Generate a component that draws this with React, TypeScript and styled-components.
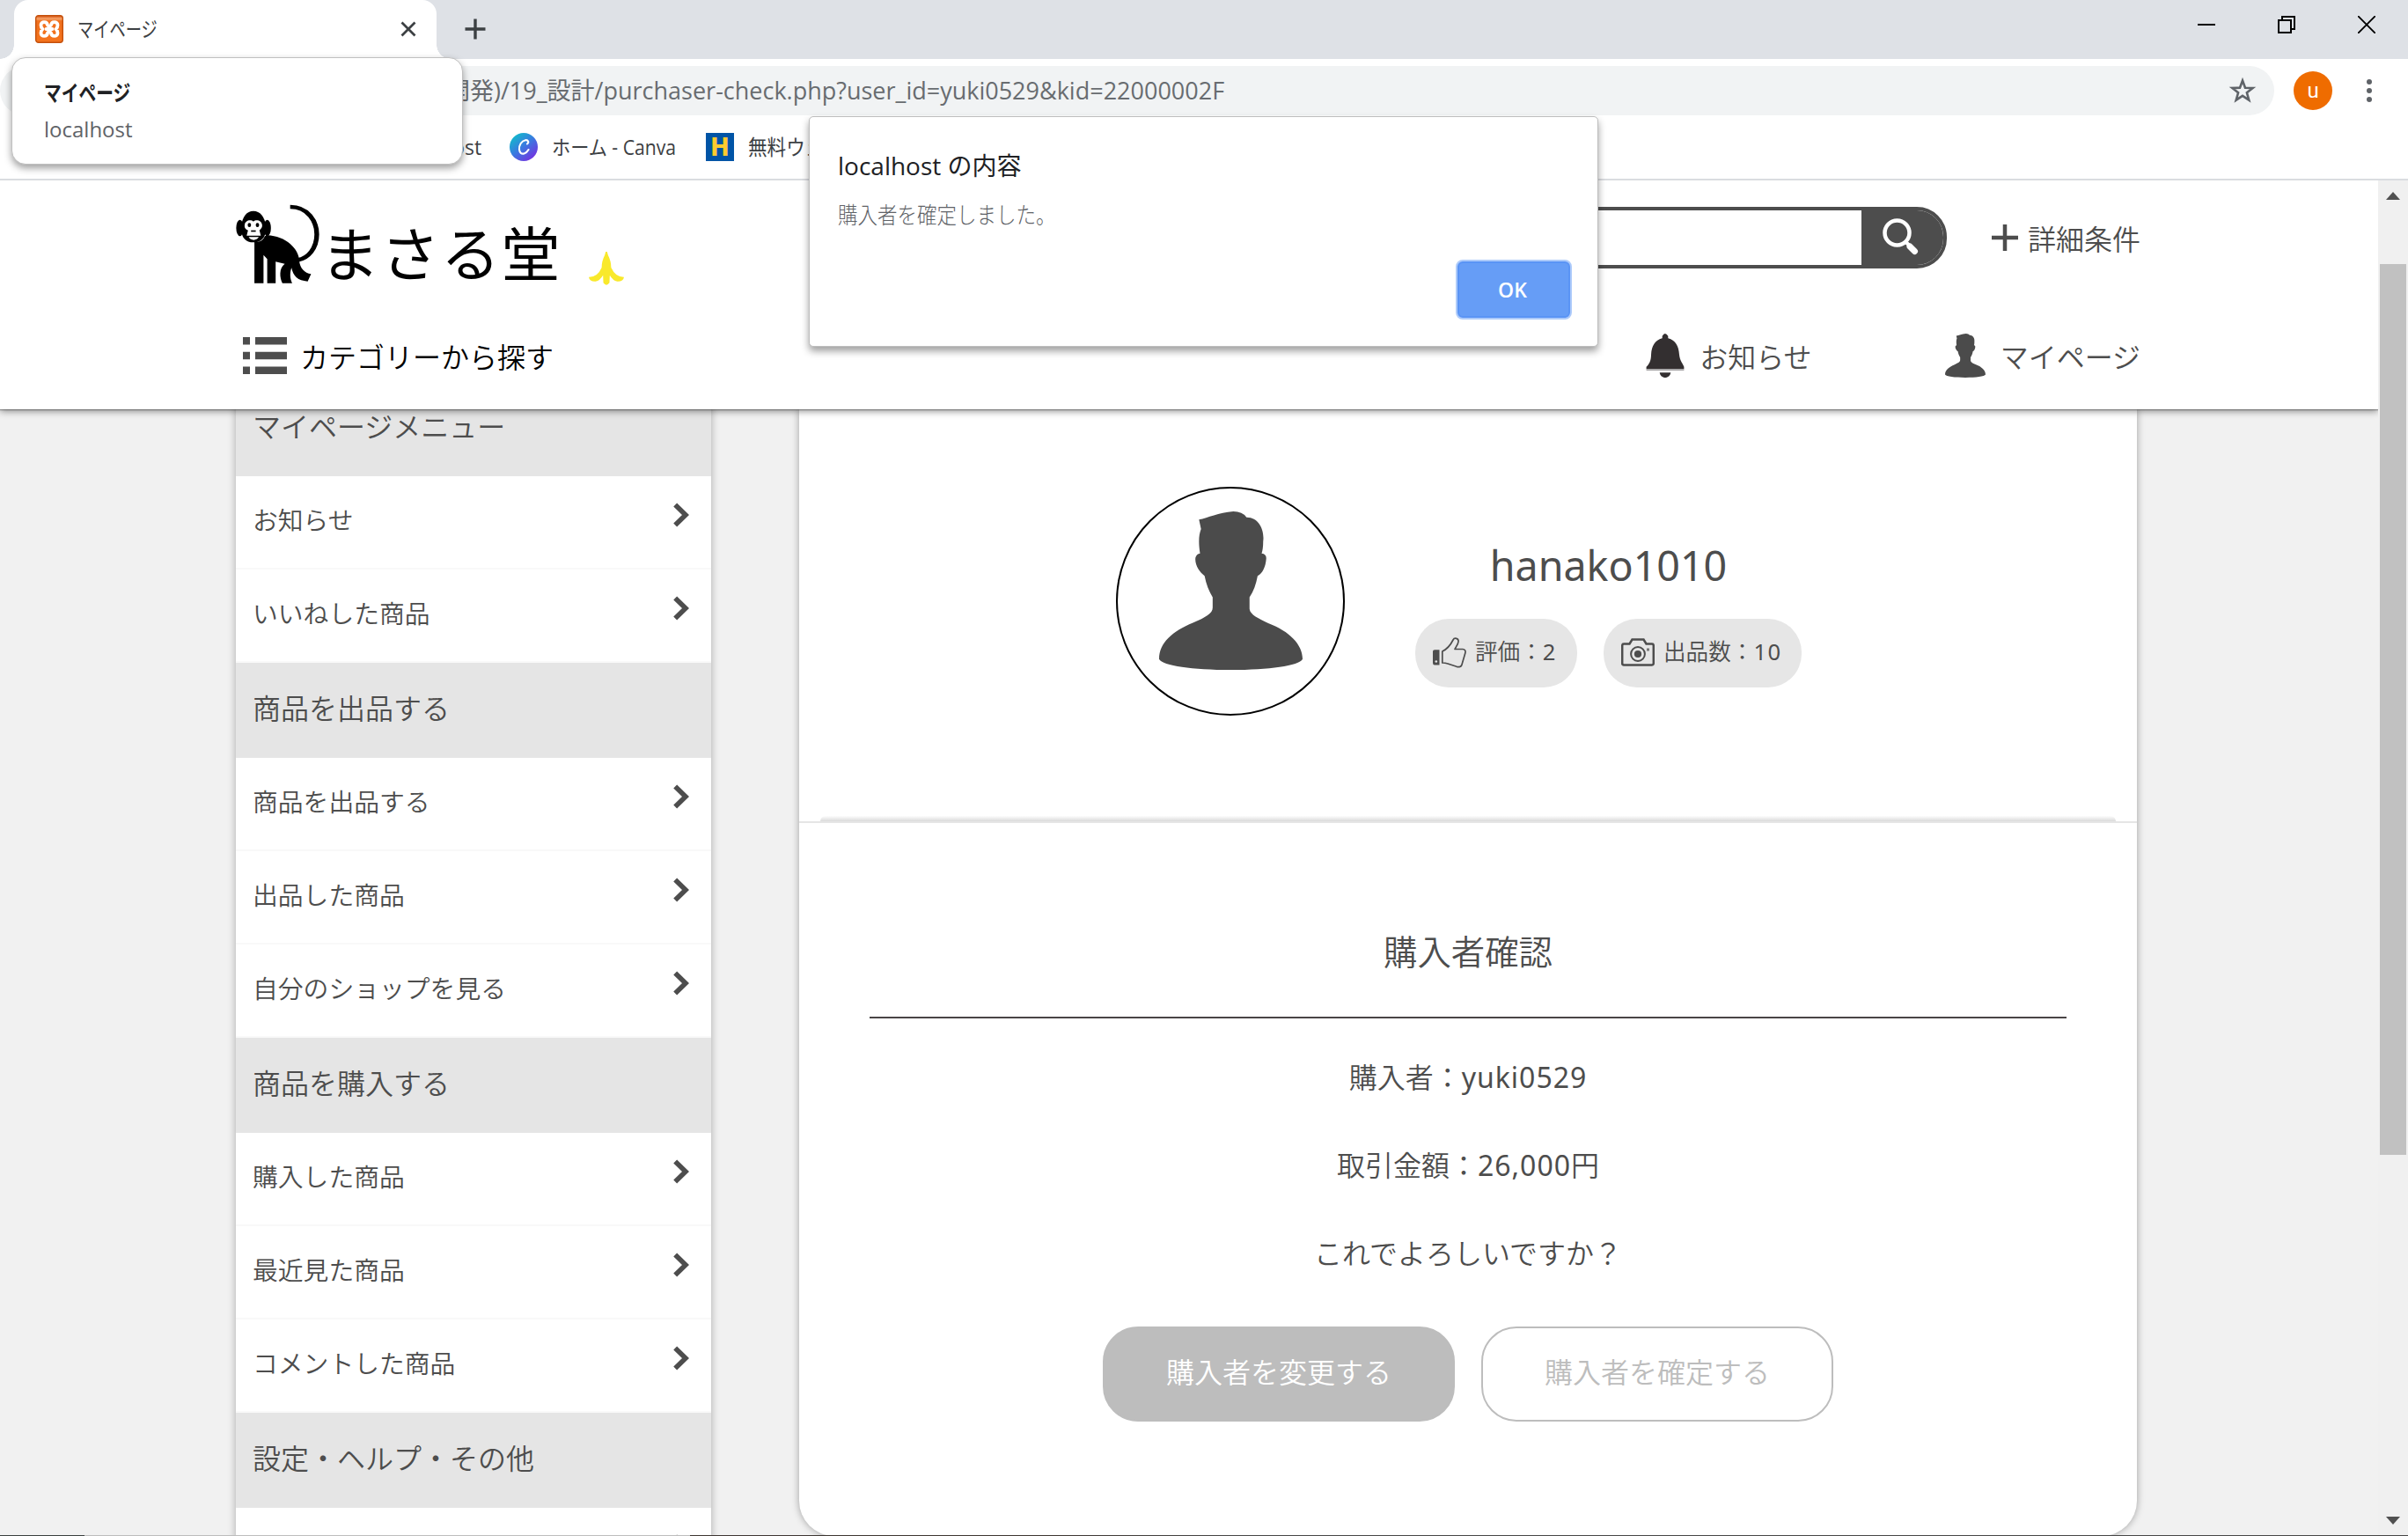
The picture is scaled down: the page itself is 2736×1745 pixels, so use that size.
import React from 'react';
import styled, { createGlobalStyle } from 'styled-components';

const PAGE_FONT = '"Noto Sans", "Noto Sans CJK JP DemiLight", "Noto Sans CJK JP", sans-serif';
const UI_FONT = '"Open Sans", "Noto Sans CJK JP", sans-serif';
const INK = '#4d4d4d';

const GlobalStyle = createGlobalStyle`
  * { box-sizing: border-box; }
  html, body { margin: 0; padding: 0; overflow: hidden; background: #f1f1f1; }
`;

/* ---------- Browser window ---------- */

const Window = styled.div`
  position: relative;
  width: 2736px;
  height: 1745px;
  display: flex;
  flex-direction: column;
  overflow: hidden;
  background: #fff;
  font-family: ${UI_FONT};
  white-space: nowrap;
`;

const TabStrip = styled.div`
  display: flex;
  align-items: stretch;
  height: 67px;
  flex: none;
  background: #dee1e6;
  padding-left: 16px;
`;

const Tab = styled.div`
  position: relative;
  width: 480px;
  height: 67px;
  display: flex;
  align-items: center;
  padding: 0 23px 1px 24px;
  gap: 16px;
  background: #fff;
  border-radius: 16px 16px 0 0;
  &::before, &::after {
    content: '';
    position: absolute;
    bottom: 0;
    width: 16px;
    height: 16px;
  }
  &::before { left: -16px; background: radial-gradient(circle at 0 0, transparent 15.5px, #fff 16px); }
  &::after { right: -16px; background: radial-gradient(circle at 100% 0, transparent 15.5px, #fff 16px); }
`;

const UiText = styled.span<{ $size: number; $color: string; $weight?: number; $stretch?: number }>`
  display: inline-block;
  font-size: ${p => p.$size}px;
  line-height: 36px;
  color: ${p => p.$color};
  font-weight: ${p => p.$weight ?? 400};
  transform: scaleX(${p => p.$stretch ?? 1});
  transform-origin: 0 50%;
`;

const TabTitle = styled.div`
  flex: 1;
  width: 0;
`;

const NewTab = styled.div`
  display: flex;
  align-items: center;
  margin-left: 32px;
  padding-bottom: 1px;
`;

const WindowButtons = styled.div`
  margin-left: auto;
  display: flex;
  gap: 71px;
  padding: 18px 37px 0 0;
`;

const Toolbar = styled.div`
  display: flex;
  align-items: center;
  height: 72px;
  flex: none;
  background: #fff;
  padding-right: 41px;
`;

const AddressBar = styled.div`
  flex: 1;
  height: 56px;
  display: flex;
  align-items: center;
  justify-content: space-between;
  margin-right: 22px;
  padding: 0 20px 0 507px;
  border-radius: 28px;
  background: #f1f3f4;
`;

const Avatar = styled.div`
  width: 44px;
  height: 44px;
  border-radius: 50%;
  background: #ef6c00;
  color: #fff;
  display: flex;
  align-items: center;
  justify-content: center;
  font: 24px/1 Roboto, sans-serif;
  margin-right: 39px;
`;

const Bookmarks = styled.div`
  display: flex;
  align-items: center;
  height: 66px;
  flex: none;
  border-bottom: 2px solid #dadce0;
  padding: 0 0 8px 500px;
  background: #fff;
`;

const Bookmark = styled.div<{ $width: number }>`
  display: flex;
  align-items: center;
  gap: 16px;
  width: ${p => p.$width}px;
  flex: none;
`;

const HIcon = styled.div`
  width: 32px;
  height: 32px;
  flex: none;
  background: #0054a6;
  color: #ffcb2f;
  display: flex;
  align-items: center;
  justify-content: center;
  font: bold 29px/32px "DejaVu Sans Condensed", "DejaVu Sans", sans-serif;
`;

const Viewport = styled.div`
  display: flex;
  flex: 1;
  min-height: 0;
`;

const Scrollbar = styled.div`
  width: 34px;
  flex: none;
  display: flex;
  flex-direction: column;
  align-items: center;
  background: #f0f0f0;
  padding: 13px 0 12px;
`;

const ScrollThumb = styled.div`
  width: 30px;
  height: 1012px;
  margin: 73px 0 auto;
  background: #c1c1c1;
`;

const BottomEdge = styled.div`
  height: 1px;
  flex: none;
  background: linear-gradient(90deg, #3a403e 96px, #bdbdbd 96px 784px, #3e3733 784px 1200px, #474747 1400px);
`;

/* ---------- Popups over the window ---------- */

const TabCard = styled.div`
  position: absolute;
  left: 13px;
  top: 65px;
  width: 513px;
  height: 122px;
  display: flex;
  flex-direction: column;
  padding: 21px 0 0 36px;
  gap: 6px;
  background: #fff;
  border: 1px solid #c0c0c0;
  border-radius: 16px;
  box-shadow: 0 4px 9px rgba(0, 0, 0, 0.38);
  z-index: 5;
`;

const Dialog = styled.div`
  position: absolute;
  left: 919px;
  top: 132px;
  width: 897px;
  height: 262px;
  display: flex;
  flex-direction: column;
  padding: 37px 29px 0 32px;
  background: #fff;
  border: 1px solid #bdbdbd;
  border-radius: 5px;
  box-shadow: 0 5px 9px rgba(0, 0, 0, 0.38);
  z-index: 6;
`;

const DialogMessage = styled.div`
  margin-top: 20px;
`;

const OkButton = styled.button`
  align-self: flex-end;
  margin-top: 33px;
  width: 132px;
  height: 68px;
  padding: 0 3px 0 0;
  border: 2px solid #aecbfa;
  border-radius: 8px;
  background: #669df6;
  box-shadow: inset 0 0 0 2px #5a94f5;
  color: #fff;
  font: 600 23px/1 ${UI_FONT};
`;

/* ---------- Site ---------- */

const Site = styled.div`
  flex: 1;
  display: flex;
  flex-direction: column;
  min-width: 0;
  overflow: hidden;
  background: #f1f1f1;
  color: ${INK};
  font-family: ${PAGE_FONT};
  font-weight: 350;
`;

const Latin = styled.span<{ $tracking: number }>`
  font-weight: 400;
  letter-spacing: ${p => p.$tracking}px;
`;

const Header = styled.header`
  position: relative;
  z-index: 2;
  height: 260px;
  flex: none;
  display: flex;
  flex-direction: column;
  padding: 27px 270px 0 268px;
  background: #fff;
  box-shadow: 0 1px 1px rgba(0, 0, 0, 0.3), 0 2px 8px rgba(0, 0, 0, 0.45);
`;

const TopRow = styled.div`
  display: flex;
  align-items: flex-start;
  height: 147px;
`;

const Brand = styled.div`
  display: flex;
  align-items: flex-start;
`;

const BrandName = styled.span`
  margin: 13px 0 0 1px;
  width: 305px;
  color: #000;
  font: 400 67px/80px "Noto Sans CJK JP", sans-serif;
  letter-spacing: 1.5px;
`;

const Banana = styled.div`
  padding-top: 54px;
`;

const SearchBox = styled.div`
  display: flex;
  margin: 3px 51px 0 auto;
  width: 871px;
  height: 70px;
  border: 4px solid ${INK};
  border-radius: 34px;
  background: #fff;
  overflow: hidden;
`;

const SearchButton = styled.div`
  margin-left: auto;
  width: 93px;
  background: ${INK};
  padding: 9px 0 0 23px;
`;

const NavItem = styled.div<{ $gap: number; $color?: string }>`
  display: flex;
  align-items: center;
  gap: ${p => p.$gap}px;
  font-size: 32px;
  line-height: 40px;
  color: ${p => p.$color ?? INK};
  & > span { padding-top: 4px; }
`;

const DetailLink = styled(NavItem)`
  margin-top: 12px;
  height: 52px;
`;

const NavRow = styled.nav`
  display: flex;
  align-items: center;
  height: 50px;
  padding-left: 8px;
`;

const NavRight = styled.div`
  display: flex;
  gap: 151px;
  margin-left: auto;
`;

const Body = styled.main`
  flex: 1;
  min-height: 0;
  display: flex;
  align-items: flex-start;
  gap: 100px;
  padding-left: 268px;
`;

const Sidebar = styled.aside`
  width: 540px;
  margin-top: -32px;
  flex: none;
  background: #fff;
  box-shadow: 0 0 9px rgba(0, 0, 0, 0.3);
`;

const MenuHeading = styled.div`
  display: flex;
  align-items: center;
  height: 108px;
  padding: 0 19px 4px;
  background: #e5e5e5;
  font-size: 32px;
  line-height: 48px;
`;

const MenuRow = styled.div`
  display: flex;
  align-items: center;
  justify-content: space-between;
  height: 106px;
  padding: 0 25px 4px 19px;
  border-bottom: 2px solid #f9f9f9;
  font-size: 28.8px;
  line-height: 44px;
  & > svg { margin-bottom: 13px; }
`;

const Panel = styled.section`
  width: 1520px;
  height: 1280px;
  flex: none;
  background: #fff;
  border-radius: 0 0 40px 40px;
  box-shadow: 0 0 9px rgba(0, 0, 0, 0.35);
`;

const Profile = styled.div`
  height: 462px;
  display: flex;
  align-items: flex-start;
  padding: 88px 0 0 360px;
  gap: 80px;
`;

const AvatarRing = styled.div`
  width: 260px;
  height: 260px;
  border: 2px solid #000;
  border-radius: 50%;
  display: flex;
  justify-content: center;
  padding-top: 26px;
`;

const ProfileInfo = styled.div`
  display: flex;
  flex-direction: column;
  align-items: center;
  padding-top: 54px;
`;

const UserName = styled.div`
  font-size: 46.6px;
  line-height: 70px;
  font-weight: 400;
`;

const Stats = styled.div`
  display: flex;
  gap: 30px;
  margin-top: 26px;
`;

const Stat = styled.div<{ $width: number }>`
  width: ${p => p.$width}px;
  height: 78px;
  border-radius: 38px;
  background: #e6e6e6;
  display: flex;
  align-items: center;
  gap: 10px;
  padding: 0 0 2px 20px;
  font-size: 25.6px;
  line-height: 40px;
`;

const SeamShadow = styled.div`
  height: 6px;
  margin: 0 24px;
  border-radius: 12px 12px 0 0;
  background: linear-gradient(#fdfdfd, #dadada);
`;

const Confirm = styled.div`
  display: flex;
  flex-direction: column;
  align-items: center;
  border-top: 2px solid #e5e5e5;
  padding: 116px 80px 0;
`;

const ConfirmTitle = styled.h1`
  margin: 0;
  width: 100%;
  height: 106px;
  border-bottom: 2px solid #494546;
  text-align: center;
  font-size: 38.4px;
  font-weight: 350;
  line-height: 60px;
`;

const Line = styled.p<{ $first?: boolean }>`
  margin: ${p => (p.$first ? '43px' : '52px')} 0 0;
  font-size: 32px;
  line-height: 48px;
`;

const Actions = styled.div`
  display: flex;
  gap: 30px;
  margin-top: 59px;
`;

const ActionButton = styled.button<{ $filled?: boolean }>`
  width: 400px;
  height: 108px;
  padding: 0 0 4px;
  border: 2px solid #bdbdbd;
  border-radius: 40px;
  background: ${p => (p.$filled ? '#bdbdbd' : '#fff')};
  color: ${p => (p.$filled ? '#fff' : '#bdbdbd')};
  font-family: ${PAGE_FONT};
  font-weight: ${p => (p.$filled ? 350 : 400)};
  font-size: 32px;
  line-height: 48px;
`;

/* ---------- Drawings ---------- */

const Drawing = styled.svg`
  display: block;
  flex: none;
`;

const XamppIcon = () => (
  <Drawing width="32" height="32" viewBox="0 0 32 32">
    <defs>
      <linearGradient id="xg" x1="0" y1="0" x2="0" y2="1">
        <stop offset="0" stopColor="#d9530f" />
        <stop offset="0.12" stopColor="#f5a36a" />
        <stop offset="0.2" stopColor="#f0701e" />
        <stop offset="1" stopColor="#f4731c" />
      </linearGradient>
    </defs>
    <rect x="0.7" y="0.7" width="30.6" height="30.6" rx="3" fill="url(#xg)" stroke="#c4500c" strokeWidth="1.4" />
    <path
      d="M12.500 16H19.500M14 11.500C13.500 6.800 6.500 7 6.500 11.500C6.500 14.500 8.500 16 8.500 16C8.500 16 6.500 17.500 6.500 20.500C6.500 25 13.500 25.200 14 20.500M18 11.500C18.500 6.800 25.500 7 25.500 11.500C25.500 14.500 23.500 16 23.500 16C23.500 16 25.500 17.500 25.500 20.500C25.500 25 18.500 25.200 18 20.500M14 11.500Q16 14.500 18 11.500M14 20.500Q16 17.500 18 20.500"
      fill="none"
      stroke="#fff"
      strokeWidth="3.800"
      strokeLinecap="round"
      strokeLinejoin="round"
    />
  </Drawing>
);

const CanvaIcon = () => (
  <Drawing width="32" height="32" viewBox="0 0 32 32">
    <defs>
      <linearGradient id="cg" x1="0.1" y1="0.1" x2="0.8" y2="0.95">
        <stop offset="0" stopColor="#10bccb" />
        <stop offset="0.5" stopColor="#3b78e0" />
        <stop offset="1" stopColor="#7432e0" />
      </linearGradient>
    </defs>
    <circle cx="16" cy="16" r="16" fill="url(#cg)" />
    <path
      d="M20 12.500C22.500 10.500 21 7.800 18 8.200C13.500 9 10.500 14 11 19C11.400 22.500 13.500 24.200 16.500 23.400C19 22.700 20.500 20.800 21.500 19"
      fill="none"
      stroke="#fff"
      strokeWidth="2.100"
      strokeLinecap="round"
    />
  </Drawing>
);

const Monkey = () => (
  <Drawing width="95" height="90" viewBox="72 97 248 270" preserveAspectRatio="none">
    <path d="M233 106C286 106 312 155 312 200C312 246 287 282 255 287" fill="none" stroke="#000" strokeWidth="14" />
    <path d="M127 222V366H154V270L165 284V366H190V293L217 300C199 315 202 348 210 366H239C232 350 232 330 237 314C242 342 256 358 285 360L295 335C276 332 262 315 260 290C260 250 220 205 165 203L158 206C150 226 136 228 127 222Z" />
    <ellipse cx="84" cy="178" rx="11" ry="28" />
    <ellipse cx="165" cy="178" rx="11" ry="28" />
    <path d="M124 120C146 120 161 145 161 180C161 212 146 227 124 227C102 227 88 212 88 180C88 145 102 120 124 120Z" />
    <path d="M124 156C132 147 150 152 150 170C150 180 142 185 142 186L146 204H104L108 186C99 182 97 176 98 168C99 152 116 147 124 156Z" fill="#fff" />
    <path d="M110 209H140Q134 219 125 219Q115 219 110 209Z" fill="#fff" />
    <ellipse cx="112" cy="168" rx="5" ry="7" />
    <ellipse cx="136" cy="168" rx="5" ry="7" />
    <path d="M117 186H131V191H117Z" />
  </Drawing>
);

const BananaIcon = () => (
  <Drawing width="40" height="38" viewBox="1124 258 104 114" preserveAspectRatio="none">
    <path
      d="M1174 258H1178L1181 270Q1190 290 1190 312Q1203 345 1228 344Q1226 360 1208 359Q1195 356 1186 338L1185 364Q1176 378 1167 364L1166 338Q1157 356 1144 359Q1126 360 1124 344Q1150 345 1162 312Q1162 290 1171 270Z"
      fill="#f9e92b"
    />
  </Drawing>
);

const PersonIcon = ({ width, height }: { width: number; height: number }) => (
  <Drawing width={width} height={height} viewBox="203 243 284 539" preserveAspectRatio="none">
    <path
      d="M203 745C203 690 230 650 270 622C295 603 309 590 309 570V535C302 515 296 490 293 462C283 450 273 425 275 400Q277 388 284 386C281 350 281 325 286 303L282 271C300 265 320 247 350 243Q368 243 376 263C400 262 412 305 409 345Q409 370 406 386Q416 388 415 405C414 430 408 455 398 462C395 490 390 515 382 535V575C383 595 400 608 420 624C460 650 487 695 487 745C480 768 420 782 345 782C270 782 210 768 203 745Z"
      fill="#4b4b4b"
    />
  </Drawing>
);

const BellIcon = () => (
  <Drawing width="44" height="50" viewBox="144 537 73 150" preserveAspectRatio="none">
    <path d="M175 553V545Q180 529 186 545V553C200 560 206 580 207 608C208 630 215 642 216 650V658H145V650C150 642 154 630 154 608C155 580 161 560 175 553Z" fill="#332f30" />
    <path d="M145 658H216V663H145Z" fill="#a5a3a4" />
    <path d="M170 670H191C189 693 172 693 170 670Z" fill="#332f30" />
  </Drawing>
);

const ListIcon = () => (
  <Drawing width="50" height="42" viewBox="0 0 50 42" fill={INK}>
    <path d="M0 0H8V8.500H0ZM14 0H50V8.500H14ZM0 16.700H8V25.200H0ZM14 16.700H50V25.200H14ZM0 33.400H8V42H0ZM14 33.400H50V42H14Z" />
  </Drawing>
);

const Chevron = () => (
  <Drawing width="18" height="28" viewBox="0 0 18 28">
    <path d="M2.200 2.500L14 14L2.200 25.500" fill="none" stroke={INK} strokeWidth="5.600" />
  </Drawing>
);

const ThumbIcon = () => (
  <Drawing width="38" height="35" viewBox="0 0 38 35">
    <path d="M0 16Q0 14.300 2 14.300H7.500V31.500H2Q0 31.500 0 29Z" fill={INK} />
    <circle cx="3.800" cy="27.500" r="1.300" fill="#e6e6e6" />
    <path
      d="M10.800 16C16 13.500 20 9 23 3C24.500 0 29.500 1 29 5C28.800 8 26 11 25 13.500H34C36.500 13.500 37.500 15.500 36.800 18L33 31C32.500 33.500 30 34 27 33.300L17 30C14 29 10.800 29 10.800 29Z"
      fill="none"
      stroke={INK}
      strokeWidth="1.700"
      strokeLinejoin="round"
    />
  </Drawing>
);

const CameraIcon = () => (
  <Drawing width="38" height="32" viewBox="0 0 38 32">
    <path
      d="M3 6.500H9.500L12.500 1.500H25.500L28.500 6.500H35Q36.800 6.500 36.800 8.500V28.500Q36.800 30.500 35 30.500H3Q1.200 30.500 1.200 28.500V8.500Q1.200 6.500 3 6.500Z"
      fill="none"
      stroke={INK}
      strokeWidth="2.500"
    />
    <circle cx="19" cy="18" r="7.900" fill="none" stroke={INK} strokeWidth="2" />
    <circle cx="19" cy="18" r="4.100" fill={INK} />
    <rect x="29" y="11.500" width="3" height="3" fill="#777" />
  </Drawing>
);

const MENU: { title: string; items: string[] }[] = [
  { title: 'マイページメニュー', items: ['お知らせ', 'いいねした商品'] },
  { title: '商品を出品する', items: ['商品を出品する', '出品した商品', '自分のショップを見る'] },
  { title: '商品を購入する', items: ['購入した商品', '最近見た商品', 'コメントした商品'] },
  { title: '設定・ヘルプ・その他', items: [''] },
];

export default function App() {
  return (
    <>
      <GlobalStyle />
      <Window>
        <TabStrip>
          <Tab>
            <XamppIcon />
            <TabTitle>
              <UiText $size={24} $color="#3c4043" $stretch={0.76}>マイページ</UiText>
            </TabTitle>
            <Drawing width="18" height="18" viewBox="0 0 18 18">
              <path d="M1.500 1.500L16.500 16.500M16.500 1.500L1.500 16.500" stroke="#3c4043" strokeWidth="2.800" />
            </Drawing>
          </Tab>
          <NewTab>
            <Drawing width="24" height="24" viewBox="0 0 24 24">
              <path d="M12 0.500V23.500M0.500 12H23.500" stroke="#3c4043" strokeWidth="3.400" />
            </Drawing>
          </NewTab>
          <WindowButtons>
            <Drawing width="20" height="20"><path d="M0 10H20" stroke="#000" strokeWidth="2" /></Drawing>
            <Drawing width="20" height="20">
              <path d="M1 5H15V19H1ZM5 5V1H19V15H15" fill="none" stroke="#000" strokeWidth="2" />
            </Drawing>
            <Drawing width="20" height="20"><path d="M0 0L20 20M20 0L0 20" stroke="#000" strokeWidth="1.900" /></Drawing>
          </WindowButtons>
        </TabStrip>
        <Toolbar>
          <AddressBar>
            <UiText $size={27} $color="#686c70">開発)/19_設計/purchaser-check.php?user_id=yuki0529&amp;kid=22000002F</UiText>
            <Drawing width="32" height="32" viewBox="0 0 32 32">
              <path d="M16 4.500L19 12.700L27.700 13L20.900 18.300L23.300 26.700L16 21.900L8.700 26.700L11.100 18.300L4.300 13L13 12.700Z" fill="none" stroke="#5f6368" strokeWidth="2.600" />
            </Drawing>
          </AddressBar>
          <Avatar>u</Avatar>
          <Drawing width="6" height="26" viewBox="0 0 6 26" fill="#5f6368">
            <circle cx="3" cy="3" r="3" />
            <circle cx="3" cy="13" r="3" />
            <circle cx="3" cy="23" r="3" />
          </Drawing>
        </Toolbar>
        <Bookmarks>
          <Bookmark $width={79}><UiText $size={23} $color="#3c4043">host</UiText></Bookmark>
          <Bookmark $width={223}>
            <CanvaIcon />
            <UiText $size={23} $color="#3c4043" $stretch={0.92}>ホーム - Canva</UiText>
          </Bookmark>
          <Bookmark $width={160}>
            <HIcon>H</HIcon>
            <UiText $size={24} $color="#3c4043" $stretch={0.9}>無料ウェブ</UiText>
          </Bookmark>
        </Bookmarks>

        <Viewport>
          <Site>
            <Header>
              <TopRow>
                <Brand>
                  <Monkey />
                  <BrandName>まさる堂</BrandName>
                  <Banana><BananaIcon /></Banana>
                </Brand>
                <SearchBox>
                  <SearchButton>
                    <Drawing width="43" height="42" viewBox="0 0 43 42" fill="none" stroke="#fff">
                      <circle cx="17.500" cy="16.500" r="14" strokeWidth="4.500" />
                      <path d="M28 27.500L31 30.500" strokeWidth="4" />
                      <path d="M32 32L37.500 37.500" strokeWidth="7" strokeLinecap="round" />
                    </Drawing>
                  </SearchButton>
                </SearchBox>
                <DetailLink $gap={11}>
                  <Drawing width="30" height="30"><path d="M15 0V30M0 15H30" stroke={INK} strokeWidth="4.500" /></Drawing>
                  <span>詳細条件</span>
                </DetailLink>
              </TopRow>
              <NavRow>
                <NavItem $gap={15} $color="#000"><ListIcon /><span>カテゴリーから探す</span></NavItem>
                <NavRight>
                  <NavItem $gap={17}><BellIcon /><span>お知らせ</span></NavItem>
                  <NavItem $gap={17}><PersonIcon width={46} height={50} /><span>マイページ</span></NavItem>
                </NavRight>
              </NavRow>
            </Header>

            <Body>
              <Sidebar>
                {MENU.map(group => (
                  <React.Fragment key={group.title}>
                    <MenuHeading>{group.title}</MenuHeading>
                    {group.items.map((item, i) => (
                      <MenuRow key={i}><span>{item}</span><Chevron /></MenuRow>
                    ))}
                  </React.Fragment>
                ))}
              </Sidebar>
              <Panel>
                <Profile>
                  <AvatarRing><PersonIcon width={163} height={180} /></AvatarRing>
                  <ProfileInfo>
                    <UserName>hanako1010</UserName>
                    <Stats>
                      <Stat $width={184}><ThumbIcon /><span>評価：<Latin $tracking={1}>2</Latin></span></Stat>
                      <Stat $width={225}><CameraIcon /><span>出品数：<Latin $tracking={1.5}>10</Latin></span></Stat>
                    </Stats>
                  </ProfileInfo>
                </Profile>
                <SeamShadow />
                <Confirm>
                  <ConfirmTitle>購入者確認</ConfirmTitle>
                  <Line $first>購入者：<Latin $tracking={1}>yuki0529</Latin></Line>
                  <Line>取引金額：<Latin $tracking={1}>26,000</Latin>円</Line>
                  <Line>これでよろしいですか？</Line>
                  <Actions>
                    <ActionButton $filled>購入者を変更する</ActionButton>
                    <ActionButton>購入者を確定する</ActionButton>
                  </Actions>
                </Confirm>
              </Panel>
            </Body>
          </Site>
          <Scrollbar>
            <Drawing width="16" height="9"><path d="M0 9L8 0L16 9Z" fill="#505050" /></Drawing>
            <ScrollThumb />
            <Drawing width="16" height="9"><path d="M0 0L8 9L16 0Z" fill="#505050" /></Drawing>
          </Scrollbar>
        </Viewport>
        <BottomEdge />

        <TabCard>
          <UiText $size={25} $color="#202124" $weight={600} $stretch={0.79}>マイページ</UiText>
          <UiText $size={24} $color="#5f6368">localhost</UiText>
        </TabCard>
        <Dialog>
          <UiText $size={28} $color="#202124">localhost の内容</UiText>
          <DialogMessage>
            <UiText $size={26} $color="#5f6368" $weight={300} $stretch={0.865}>購入者を確定しました。</UiText>
          </DialogMessage>
          <OkButton>OK</OkButton>
        </Dialog>
      </Window>
    </>
  );
}
